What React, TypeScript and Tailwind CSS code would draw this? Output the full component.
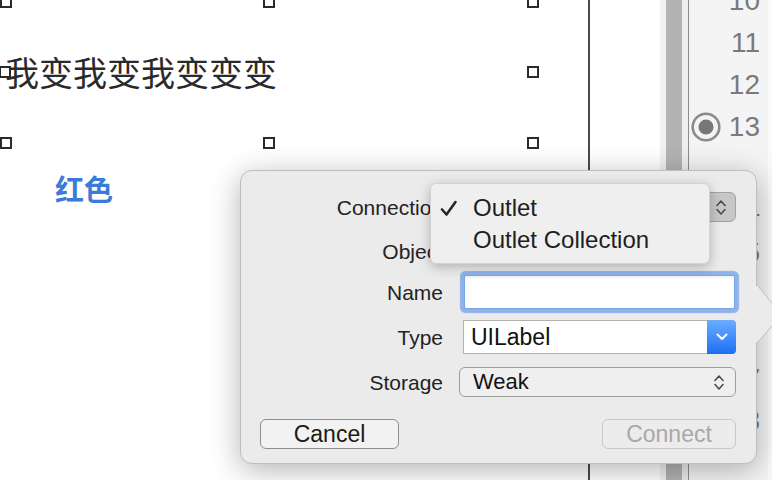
import React from 'react';

const handles = [
  'left-[0px] top-[-4px]',
  'left-[263px] top-[-4px]',
  'left-[527px] top-[-4px]',
  'left-[-1px] top-[66px]',
  'left-[527px] top-[66px]',
  'left-[0px] top-[137px]',
  'left-[263px] top-[137px]',
  'left-[527px] top-[137px]',
];

const lineNumbers = ['10', '11', '12', '13', '', '14', '15', '16', '', '17', '18'];

function UpDown({ className = '' }: { className?: string }) {
  return (
    <svg width="12" height="19" viewBox="0 0 12 19" className={className}>
      <path d="M2 7.5 L6 3 L10 7.5" fill="none" stroke="#4d4d4d" strokeWidth="1.6" strokeLinecap="round" strokeLinejoin="round" />
      <path d="M2 11.5 L6 16 L10 11.5" fill="none" stroke="#4d4d4d" strokeWidth="1.6" strokeLinecap="round" strokeLinejoin="round" />
    </svg>
  );
}

export default function App() {
  return (
    <div className="relative flex h-[480px] w-[772px] overflow-hidden bg-white">
      {/* Interface Builder canvas */}
      <div className="relative h-full w-[588px] shrink-0 bg-white">
        <div className="absolute left-[5px] top-[52px] font-['Noto_Sans_CJK_SC',sans-serif] text-[34px] leading-[40px] text-[#2a2a2a]">
          我变我变我变变变
        </div>
        {handles.map((pos) => (
          <div key={pos} className={`absolute h-[12px] w-[12px] border-2 border-[#2b2b2b] bg-white ${pos}`} />
        ))}
        <div className="absolute left-[55px] top-[170px] font-['Noto_Sans_CJK_SC',sans-serif] text-[29px] font-bold leading-[36px] text-[#3b7bd6]">
          红色
        </div>
      </div>
      <div className="w-[2px] shrink-0 bg-[#4a4a4a]" />
      <div className="w-[70px] shrink-0 bg-white" />
      <div className="w-[6px] shrink-0 bg-[#f1f1f1]" />
      <div className="w-[16px] shrink-0 bg-[#b3b3b3]" />
      <div className="w-[6px] shrink-0 bg-[#eeeeee]" />
      <div className="w-[1px] shrink-0 bg-[#8c8c8c]" />

      {/* Line number gutter */}
      <div className="flex w-[79px] shrink-0 flex-col bg-[#f4f4f4] font-['Liberation_Sans',Arial,sans-serif]">
        <div className="-mt-[20px] flex flex-col">
          {lineNumbers.map((n, i) => (
            <div key={i} className="flex h-[42px] items-center justify-end gap-[8px] pr-[8px] text-[28px] leading-none text-[#7a7a7a]">
              {n === '13' && (
                <svg width="30" height="30" viewBox="0 0 30 30">
                  <circle cx="15" cy="15" r="13.3" fill="none" stroke="#8a8a8a" strokeWidth="2.6" />
                  <circle cx="15" cy="15" r="7.5" fill="#777777" />
                </svg>
              )}
              {n}
            </div>
          ))}
        </div>
      </div>
      <div className="flex-1 bg-[#fafafa]" />

      {/* Connection popover */}
      <div className="absolute left-[240px] top-[170px] h-[294px] w-[517px] rounded-[12px] border border-[#bdbdbd] bg-[#ebebeb] font-['Liberation_Sans',Arial,sans-serif] text-[#232323] shadow-[0_6px_30px_rgba(0,0,0,0.3)]">
        <svg className="absolute left-[515px] top-[114px]" width="30" height="58" viewBox="0 0 30 58">
          <path d="M1 0 L26 30 L1 58" fill="#ebebeb" stroke="#bdbdbd" strokeWidth="1" />
          <rect x="0" y="1" width="2" height="56" fill="#ebebeb" />
        </svg>

        <div className="flex flex-col pt-[21px]">
          {/* Connection */}
          <div className="flex h-[30px] items-center">
            <div className="w-[202px] text-right text-[21px] leading-none">Connection</div>
            <div className="ml-[19px] flex h-[30px] w-[274px] items-center justify-end rounded-[6px] border border-[#a2a2a2] bg-[#c7c7c7] pr-[8px]">
              <UpDown />
            </div>
          </div>

          {/* Object */}
          <div className="mt-[14px] flex h-[30px] items-center">
            <div className="w-[202px] text-right text-[21px] leading-none">Object</div>
          </div>

          {/* Name */}
          <div className="mt-[9px] flex h-[34px] items-center">
            <div className="w-[202px] text-right text-[21px] leading-none">Name</div>
            <div className="ml-[21px] h-[34px] w-[271px] rounded-[2px] border border-[#7ba6e6] bg-white shadow-[0_0_1px_4px_rgba(126,168,234,0.85),inset_0_2px_3px_rgba(0,0,0,0.06)]" />
          </div>

          {/* Type */}
          <div className="mt-[11px] flex h-[34px] items-center">
            <div className="w-[202px] text-right text-[21px] leading-none">Type</div>
            <div className="ml-[20px] flex h-[34px] w-[273px]">
              <div className="flex flex-1 items-center border border-r-0 border-[#b2b2b2] bg-white pl-[7px] text-[23px] leading-none text-[#111]">
                UILabel
              </div>
              <div className="flex w-[29px] items-center justify-center rounded-r-[4px] bg-gradient-to-b from-[#6aacff] to-[#1b6ef4]">
                <svg width="12" height="8" viewBox="0 0 12 8">
                  <path d="M1.5 1.5 L6 6 L10.5 1.5" fill="none" stroke="#ffffff" strokeWidth="2" strokeLinecap="round" strokeLinejoin="round" />
                </svg>
              </div>
            </div>
          </div>

          {/* Storage */}
          <div className="mt-[13px] flex h-[30px] items-center">
            <div className="w-[202px] text-right text-[21px] leading-none">Storage</div>
            <div className="ml-[16px] flex h-[30px] w-[277px] items-center justify-between rounded-[6px] border border-[#9d9d9d] bg-[#efefef] pl-[13px] pr-[10px] text-[22px] leading-none text-[#111]">
              <span>Weak</span>
              <UpDown />
            </div>
          </div>

          {/* Buttons */}
          <div className="mt-[22px] flex items-center justify-between">
            <div className="ml-[19px] flex h-[30px] w-[139px] items-center justify-center rounded-[6px] border border-[#8e8e8e] bg-[#f2f2f2] text-[23px] leading-none text-[#1a1a1a]">
              Cancel
            </div>
            <div className="mr-[20px] flex h-[30px] w-[134px] items-center justify-center rounded-[6px] border border-[#c8c8c8] bg-[#ececec] text-[23px] leading-none text-[#a8a8a8]">
              Connect
            </div>
          </div>
        </div>

        {/* Connection menu */}
        <div className="absolute left-[189px] top-[12px] h-[81px] w-[280px] rounded-[6px] border border-[#d2d2d2] bg-[#efefef] pt-[8px] text-[24px] leading-none text-[#1e1e1e] shadow-[0_3px_12px_rgba(0,0,0,0.25)]">
          <div className="flex h-[32px] items-center">
            <div className="flex w-[42px] justify-start pl-[9px]">
              <svg width="18" height="17" viewBox="0 0 18 17">
                <path d="M2 9.5 L6.5 14.5 L15.5 2" fill="none" stroke="#262626" strokeWidth="2.6" strokeLinecap="round" strokeLinejoin="round" />
              </svg>
            </div>
            <span>Outlet</span>
          </div>
          <div className="flex h-[32px] items-center pl-[42px]">Outlet Collection</div>
        </div>
      </div>
    </div>
  );
}
